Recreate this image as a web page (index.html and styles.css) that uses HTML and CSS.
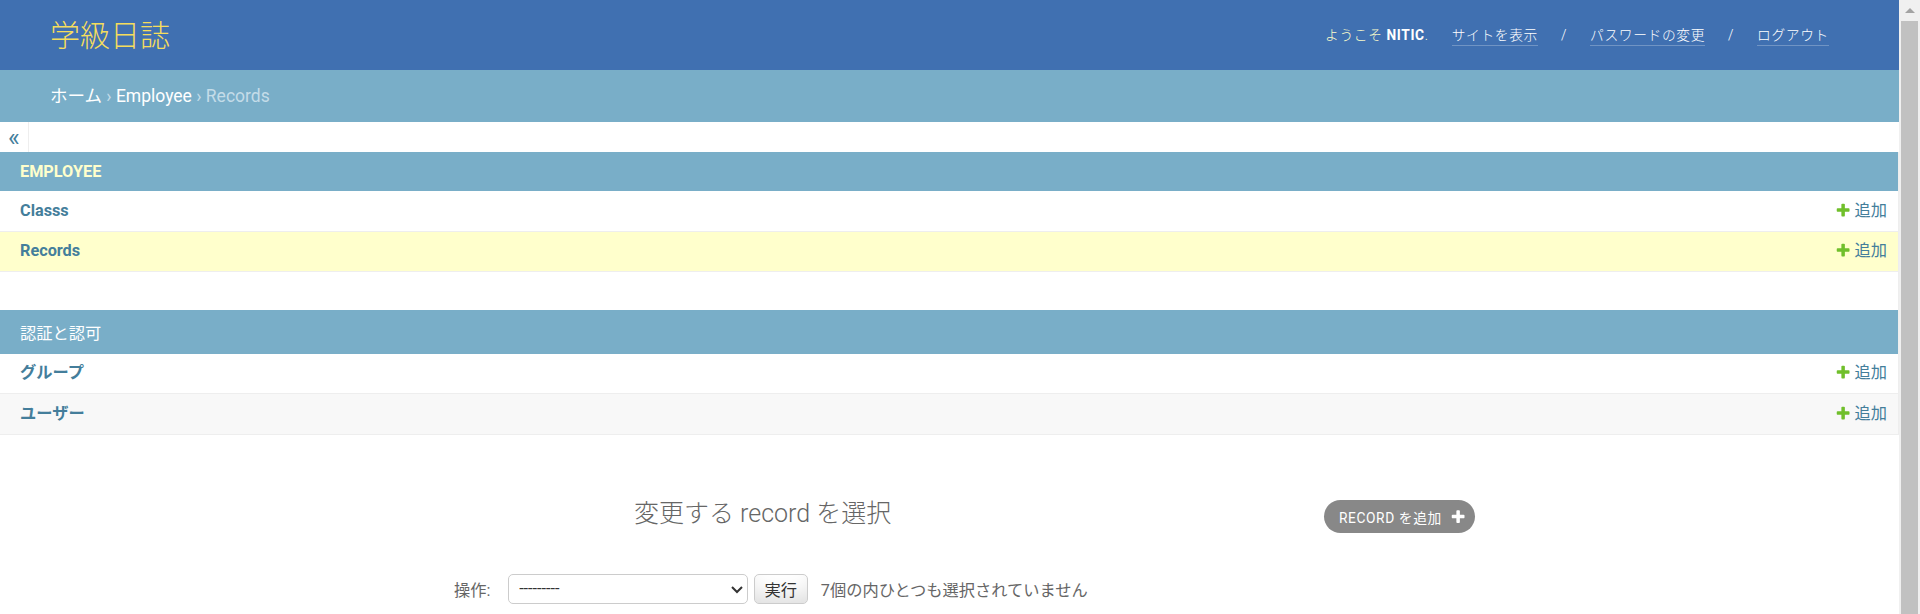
FILE: index.html
```html
<!DOCTYPE html>
<html lang="ja">
<head>
<meta charset="utf-8">
<title>Records | 学級日誌</title>
<link rel="stylesheet" href="styles.css">
</head>
<body>
<div class="page">
<header class="header">
  <div class="branding">学級日誌</div>
  <div class="user-tools">
    <span class="welcome">ようこそ <strong>NITIC</strong>.</span>
    <a class="tool-link" href="#">サイトを表示</a>
    <span class="sep">/</span>
    <a class="tool-link" href="#">パスワードの変更</a>
    <span class="sep">/</span>
    <a class="tool-link" href="#">ログアウト</a>
  </div>
</header>
<div class="breadcrumbs"><a href="#">ホーム</a> › <a href="#">Employee</a> › Records</div>
<div class="main">
  <div class="toggle-bar"><span class="toggle">«</span></div>
  <nav class="sidebar">
    <div class="module">
      <div class="app-caption current">Employee</div>
      <div class="model-row">
        <a class="model-name" href="#">Classs</a>
        <a class="addlink" href="#"><svg class="add-icon" viewBox="0 0 1792 1792" width="16.25" height="16.25"><path fill="#70bf2b" d="M1600 796v192q0 40-28 68t-68 28h-416v416q0 40-28 68t-68 28h-192q-40 0-68-28t-28-68v-416h-416q-40 0-68-28t-28-68v-192q0-40 28-68t68-28h416v-416q0-40 28-68t68-28h192q40 0 68 28t28 68v416h416q40 0 68 28t28 68z"/></svg>追加</a>
      </div>
      <div class="model-row current">
        <a class="model-name" href="#">Records</a>
        <a class="addlink" href="#"><svg class="add-icon" viewBox="0 0 1792 1792" width="16.25" height="16.25"><path fill="#70bf2b" d="M1600 796v192q0 40-28 68t-68 28h-416v416q0 40-28 68t-68 28h-192q-40 0-68-28t-28-68v-416h-416q-40 0-68-28t-28-68v-192q0-40 28-68t68-28h416v-416q0-40 28-68t68-28h192q40 0 68 28t28 68v416h416q40 0 68 28t28 68z"/></svg>追加</a>
      </div>
    </div>
    <div class="module">
      <div class="app-caption">認証と認可</div>
      <div class="model-row">
        <a class="model-name" href="#">グループ</a>
        <a class="addlink" href="#"><svg class="add-icon" viewBox="0 0 1792 1792" width="16.25" height="16.25"><path fill="#70bf2b" d="M1600 796v192q0 40-28 68t-68 28h-416v416q0 40-28 68t-68 28h-192q-40 0-68-28t-28-68v-416h-416q-40 0-68-28t-28-68v-192q0-40 28-68t68-28h416v-416q0-40 28-68t68-28h192q40 0 68 28t28 68v416h416q40 0 68 28t28 68z"/></svg>追加</a>
      </div>
      <div class="model-row alt">
        <a class="model-name" href="#">ユーザー</a>
        <a class="addlink" href="#"><svg class="add-icon" viewBox="0 0 1792 1792" width="16.25" height="16.25"><path fill="#70bf2b" d="M1600 796v192q0 40-28 68t-68 28h-416v416q0 40-28 68t-68 28h-192q-40 0-68-28t-28-68v-416h-416q-40 0-68-28t-28-68v-192q0-40 28-68t68-28h416v-416q0-40 28-68t68-28h192q40 0 68 28t28 68v416h416q40 0 68 28t28 68z"/></svg>追加</a>
      </div>
    </div>
  </nav>
  <div class="content">
    <div class="content-head">
      <h1 class="title">変更する record を選択</h1>
      <a class="object-tool" href="#">Record を追加<svg class="tool-icon" viewBox="0 0 1792 1792" width="16.25" height="16.25"><path fill="#fff" d="M1600 736v192q0 40-28 68t-68 28h-416v416q0 40-28 68t-68 28h-192q-40 0-68-28t-28-68v-416h-416q-40 0-68-28t-28-68v-192q0-40 28-68t68-28h416v-416q0-40 28-68t68-28h192q40 0 68 28t28 68v416h416q40 0 68 28t28 68z"/></svg></a>
    </div>
    <div class="actions">
      <label class="action-label">操作:</label>
      <div class="select-wrap">
        <select class="action-select"><option>---------</option></select>
        <svg class="chevron" viewBox="0 0 12 8" width="12" height="8"><polyline points="1,1 6,6 11,1" fill="none" stroke="#333" stroke-width="2"/></svg>
      </div>
      <button class="go" type="button">実行</button>
      <span class="counter">7個の内ひとつも選択されていません</span>
    </div>
  </div>
</div>
</div>
<div class="scrollbar" aria-hidden="true">
  <div class="scroll-up"><span class="scroll-arrow"></span></div>
  <div class="scroll-thumb"></div>
</div>
</body>
</html>
```
FILE: styles.css
```css
body {
  margin: 0;
  font-family: Roboto, "Noto Sans CJK JP", sans-serif;
  font-size: 17.5px;
  color: #333;
  background: #fff;
}

a {
  text-decoration: none;
}

.page {
  margin-right: 21px;
  min-height: 626px;
}

/* fake window scrollbar (overlay) */
.scrollbar {
  position: fixed;
  top: 0;
  right: 0;
  width: 21px;
  height: 100vh;
  display: flex;
  flex-direction: column;
  background: #f0f0f0;
}
.scroll-up {
  height: 21px;
  display: flex;
  align-items: center;
  justify-content: center;
  flex: none;
}
.scroll-arrow {
  width: 0;
  height: 0;
  margin-top: -1px;
  border-left: 5px solid transparent;
  border-right: 5px solid transparent;
  border-bottom: 5px solid #a3a3a3;
}
.scroll-thumb {
  flex: 1;
  margin: 0 2px;
  background: #c1c1c1;
}

/* header */
.header {
  display: flex;
  justify-content: space-between;
  align-items: center;
  height: 70px;
  box-sizing: border-box;
  padding: 0 70px 0 50px;
  background: #4070b1;
  color: #ffc;
}
.branding {
  font-size: 30px;
  font-weight: 300;
  line-height: 45px;
  color: #f5dd5d;
}
.user-tools {
  display: flex;
  align-items: baseline;
  gap: 23px;
  font-size: 13.75px;
  font-weight: 300;
  letter-spacing: 0.625px;
  line-height: 20px;
  color: #ffc;
}
.welcome strong {
  font-weight: 700;
  color: #fff;
}
.tool-link {
  color: #fff;
  border-bottom: 1px solid rgba(255, 255, 255, 0.25);
}
.sep {
  color: #fff;
}

/* breadcrumbs */
.breadcrumbs {
  background: #79aec8;
  padding: 12.5px 50px;
  font-size: 17.5px;
  line-height: 27px;
  color: #c4dce8;
}
.breadcrumbs a {
  color: #fff;
}

/* sidebar */
.toggle-bar {
  display: flex;
  height: 30px;
}
.toggle {
  display: flex;
  align-items: center;
  justify-content: center;
  width: 28.75px;
  box-sizing: border-box;
  border-right: 1px solid #eee;
  font-size: 25px;
  line-height: 1;
  color: #447e9b;
}
.sidebar {
  border-right: 1px solid #eee;
}
.module {
  margin-bottom: 37.5px;
}
.app-caption {
  padding: 10px 20px;
  background: #79aec8;
  color: #fff;
  font-size: 16.25px;
  text-transform: uppercase;
}
.app-caption.current {
  color: #ffc;
  font-weight: 700;
}
.model-row {
  display: flex;
  justify-content: space-between;
  align-items: flex-start;
  padding: 9.5px 11px 10.5px 20px;
  border-bottom: 1px solid #eee;
  font-size: 16.25px;
  line-height: 19.5px;
}
.model-row.current {
  background: #ffc;
}
.model-row.alt {
  background: #f8f8f8;
}
.model-name {
  color: #447e9b;
  font-weight: 700;
}
.addlink {
  display: inline-flex;
  align-items: flex-start;
  color: #447e9b;
}
.add-icon {
  margin-top: 1.25px;
  margin-right: 3.75px;
}

/* content */
.content {
  width: 1021px;
  padding: 23.5px 0 0 454px;
}
.content-head {
  display: flex;
  justify-content: space-between;
  align-items: flex-start;
  padding-left: 180px;
}
.title {
  margin: 0;
  font-size: 25px;
  font-weight: 300;
  line-height: 36px;
  color: #666;
}
.object-tool {
  display: flex;
  align-items: center;
  gap: 8px;
  margin-top: 4.7px;
  height: 33px;
  padding: 0 8.75px 0 15px;
  border-radius: 17px;
  background: #888;
  color: #fff;
  font-size: 13.75px;
  letter-spacing: 0.625px;
  text-transform: uppercase;
}
.actions {
  display: flex;
  align-items: center;
  margin-top: 28px;
  padding: 12.5px 0;
  font-size: 16.25px;
  color: #666;
}
.action-label {
  margin-right: 17.7px;
}
.select-wrap {
  position: relative;
  display: flex;
}
.action-select {
  width: 240px;
  height: 30px;
  box-sizing: border-box;
  padding: 0 10px;
  border: 1px solid #ccc;
  border-radius: 5px;
  background: #fff;
  appearance: none;
  font-family: inherit;
  font-size: 16.25px;
  color: #333;
}
.chevron {
  position: absolute;
  right: 5px;
  top: 12px;
  pointer-events: none;
}
.go {
  margin-left: 5.7px;
  width: 53.7px;
  height: 30px;
  padding: 0;
  border: 1px solid #ccc;
  border-radius: 5px;
  background: #fff;
  box-shadow: inset 0 -18.75px 25px -12.5px rgba(0, 0, 0, 0.15);
  font-family: inherit;
  font-size: 16.25px;
  color: #333;
}
.counter {
  margin-left: 13.3px;
}
```
